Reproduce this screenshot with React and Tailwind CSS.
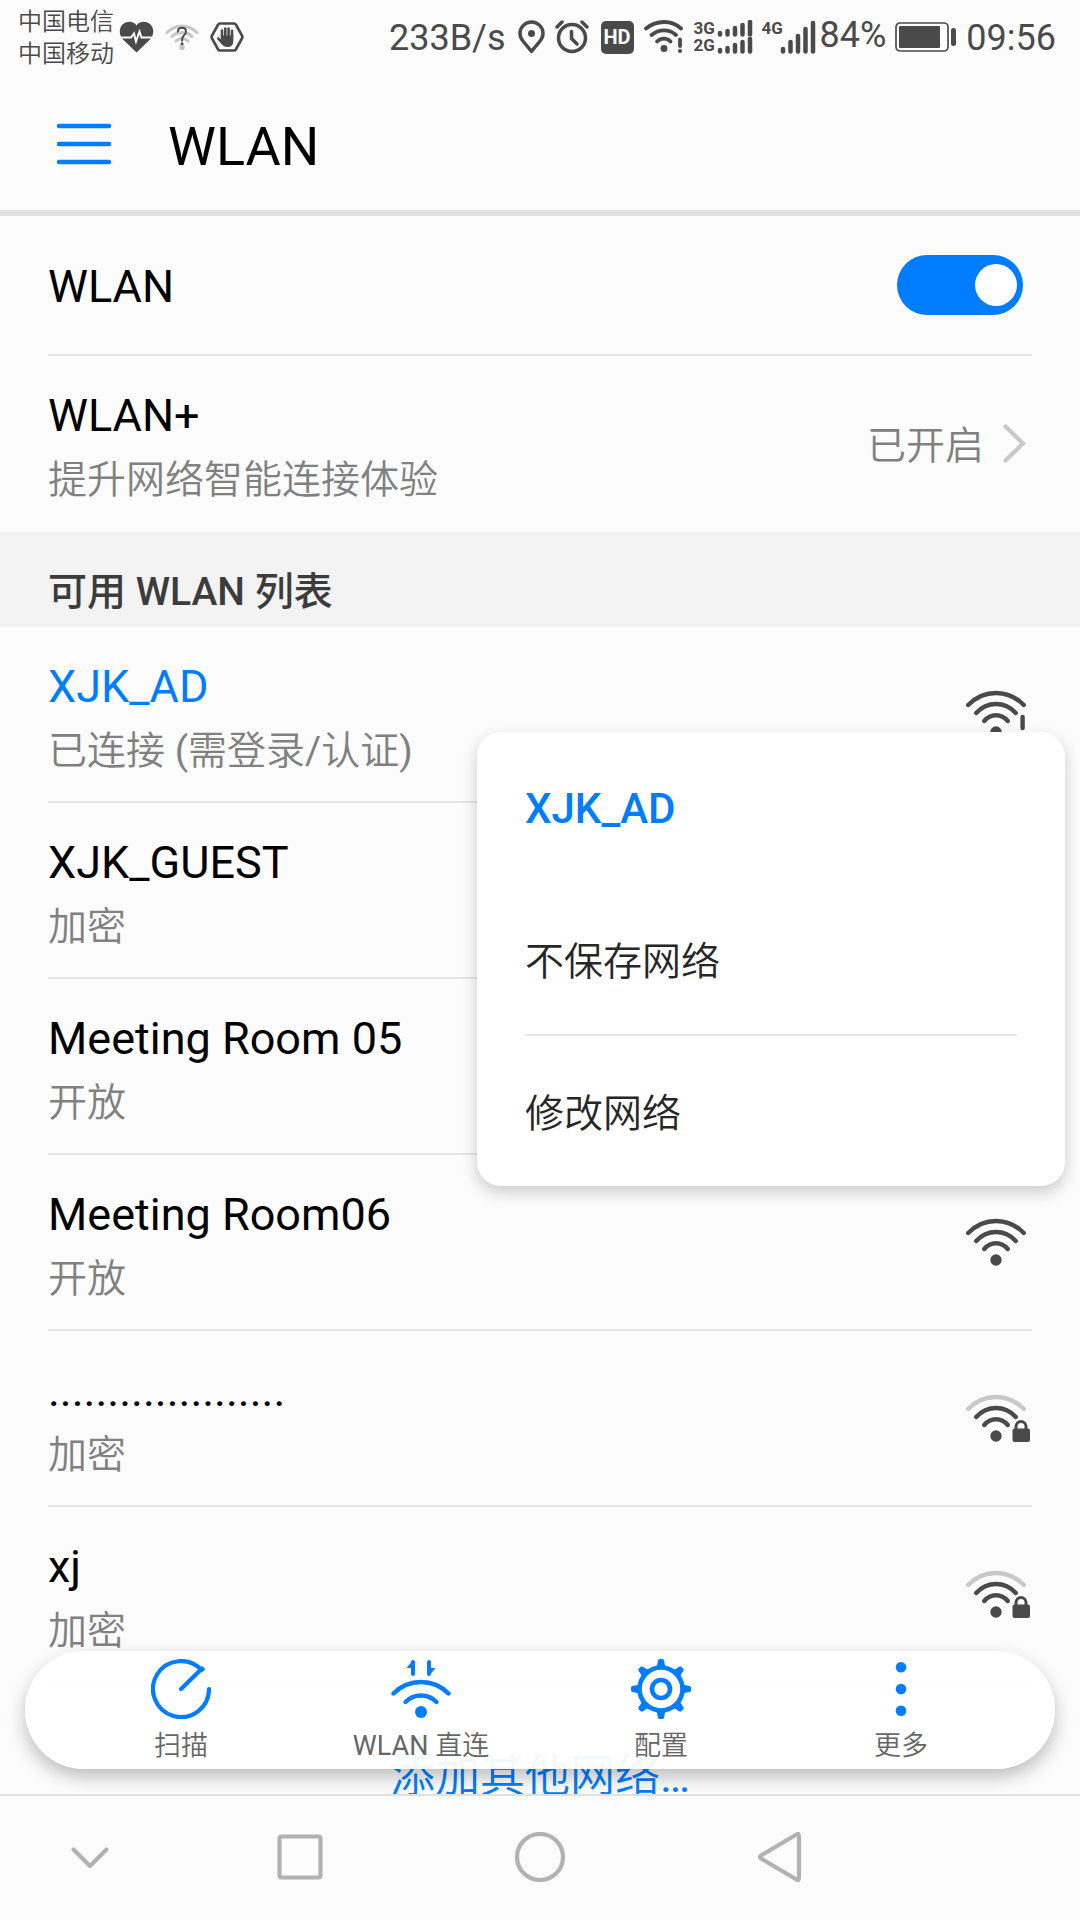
import React, { useState } from "react";

const INK = "#4a4a4a";
const BLUE = "#007dff";

const networks = [
  { name: "XJK_AD", state: "已连接 (需登录/认证)", active: true, kind: "alert" },
  { name: "XJK_GUEST", state: "加密", kind: "lock" },
  { name: "Meeting Room 05", state: "开放", kind: "open" },
  { name: "Meeting Room06", state: "开放", kind: "open" },
  { name: "....................", state: "加密", kind: "lock" },
  { name: "xj", state: "加密", kind: "lock" },
];

// Chinese runs are set a little lighter than the Latin letters and signs beside them.
function Mixed({ children }) {
  return children
    .split(/([\u4e00-\u9fff]+)/)
    .filter(Boolean)
    .map((part, i) =>
      /[\u4e00-\u9fff]/.test(part) ? (
        <span key={i} className="font-[350]">{part}</span>
      ) : (
        part
      )
    );
}

function WifiSignal({ kind }) {
  const outer = kind === "lock" ? "#c8c8c8" : INK;
  return (
    <svg width="66" height="48" viewBox="0 0 66 48" fill="none" strokeWidth="4.4" strokeLinecap="round" aria-hidden="true">
      <path d="M2.2 15 Q14 3 30 3 Q46 3 57.8 15" stroke={outer} />
      <path d="M10.2 23 Q18.5 14 30 14 Q41.5 14 49.8 23" stroke={INK} />
      <path d="M18.2 31 Q23 25.2 30 25.2 Q37 25.2 41.8 31" stroke={INK} />
      <circle cx="30" cy="42" r="5.7" fill={INK} />
      {kind === "lock" && (
        <g>
          <path d="M50 36 V32.5 a5 5 0 0 1 10 0 V36" stroke={INK} strokeWidth="3" />
          <rect x="46.5" y="34.5" width="17.5" height="13.5" rx="2" fill={INK} />
        </g>
      )}
      {kind === "alert" && (
        <g>
          <path d="M56.6 27 V38" stroke={INK} strokeWidth="4.4" />
          <circle cx="56.6" cy="45" r="2.4" fill={INK} />
        </g>
      )}
    </svg>
  );
}

function HeartIcon() {
  return (
    <svg width="35" height="32" viewBox="0 0 35 32" aria-hidden="true">
      <path d="M17.5 31.5 L4 18.5 C-1 13.5 0 5 5.5 2 C10 -.3 15 .6 17.5 4.5 C20 .6 25 -.3 29.5 2 C35 5 36 13.5 31 18.5 Z" fill={INK} />
      <path d="M0 16.5 H12 L15 12.5 L17 20.5 L20.5 10.5 L22.5 16.5 H35" fill="none" stroke="#fcfcfc" strokeWidth="2" />
    </svg>
  );
}

function WifiQueryIcon() {
  return (
    <svg width="34" height="28" viewBox="0 0 34 28" fill="none" strokeLinecap="round" aria-hidden="true">
      <g stroke="#c6c6c6" strokeWidth="3">
        <path d="M2 9.5 Q9 3 17 3 Q25 3 32 9.5" />
        <path d="M7 13.5 Q11 9.5 17 9.5 Q23 9.5 27 13.5" />
        <path d="M11 18 Q14 15.5 17 15.5 Q20 15.5 23 18" />
      </g>
      <circle cx="17" cy="24.5" r="2.8" fill="#c6c6c6" />
      <path d="M12.8 8.5 Q13 4.7 17 4.7 Q21 4.7 21 8.5 Q21 11 18.8 12.5 Q17 14 17 17.5" stroke={INK} strokeWidth="2" />
      <circle cx="17" cy="20.7" r="1.5" fill={INK} />
    </svg>
  );
}

function HandIcon() {
  return (
    <svg width="34" height="30" viewBox="0 0 34 30" fill="none" aria-hidden="true">
      <path d="M10 1.5 H24 Q25.2 1.5 26 2.8 L32 13.5 Q32.7 15 32 16.5 L26 27.2 Q25.2 28.5 24 28.5 H10 Q8.8 28.5 8 27.2 L2 16.5 Q1.3 15 2 13.5 L8 2.8 Q8.8 1.5 10 1.5Z" stroke={INK} strokeWidth="2.7" />
      <path d="M12 14.5 V8.5 M15.3 14 V6.6 M18.6 14 V6.6 M22 14.5 V8.8 M8.3 16.5 L12.5 21" stroke={INK} strokeWidth="2.6" strokeLinecap="round" />
      <path d="M10.7 13.5 H23.3 V19 Q23.3 25 17.5 25 Q13.5 25 11.3 21.5 Z" fill={INK} />
    </svg>
  );
}

function PinIcon() {
  return (
    <svg width="27" height="34" viewBox="0 0 27 34" fill="none" aria-hidden="true">
      <path d="M13.5 31.3 L5.3 21.5 Q2 17.5 2 13.5 A11.5 11.5 0 0 1 25 13.5 Q25 17.5 21.7 21.5 Z" stroke={INK} strokeWidth="3.5" strokeLinejoin="round" />
      <circle cx="13.5" cy="13.5" r="3.5" fill={INK} />
    </svg>
  );
}

function AlarmIcon() {
  return (
    <svg width="34" height="34" viewBox="0 0 34 34" fill="none" stroke={INK} strokeWidth="3.5" strokeLinecap="round" aria-hidden="true">
      <circle cx="17" cy="18" r="13.5" />
      <path d="M2 7 L7 2 M32 7 L27 2" />
      <path d="M16.5 11.5 V18.5 L22 24" />
    </svg>
  );
}

function StatusWifiIcon() {
  return (
    <svg width="40" height="34" viewBox="0 0 40 34" fill="none" stroke={INK} strokeWidth="3.8" strokeLinecap="round" aria-hidden="true">
      <path d="M2 8.5 Q10 2 20 2 Q30 2 37 8.5" />
      <path d="M7.5 15 Q13 10.3 20 10.3 Q27 10.3 32 15" />
      <path d="M13 21.5 Q16 18.6 20 18.6 Q24 18.6 26.5 21.5" />
      <circle cx="20" cy="28.5" r="3.4" fill={INK} stroke="none" />
      <path d="M36 19.5 V26" />
      <circle cx="36" cy="31" r="2" fill={INK} stroke="none" />
    </svg>
  );
}

function Bars({ width, height, step, sizes, stroke }) {
  return (
    <svg width={width} height={height} fill="none" stroke={INK} strokeWidth={stroke} strokeLinecap="round" aria-hidden="true">
      {sizes.map((s, i) => (
        <path key={i} d={`M${3 + i * step} ${height - 2.5} V${height - s + 2}`} />
      ))}
    </svg>
  );
}

function BatteryIcon() {
  return (
    <svg width="62" height="30" viewBox="0 0 62 30" fill="none" aria-hidden="true">
      <rect x="1" y="1" width="52" height="28" rx="4" stroke={INK} strokeWidth="1.7" />
      <rect x="4" y="4" width="41" height="22" rx="1" fill={INK} />
      <rect x="56" y="6" width="5" height="18" rx="2.5" fill={INK} />
    </svg>
  );
}

function StatusBar() {
  return (
    <header className="flex h-[74px] shrink-0 items-center pl-[18px] pr-6 text-[#4a4a4a]">
      <div className="pt-0.5 text-2xl font-[350] leading-8">
        <p>中国电信</p>
        <p>中国移动</p>
      </div>
      <div className="ml-[5px] flex items-center gap-[11px]">
        <HeartIcon />
        <WifiQueryIcon />
        <HandIcon />
      </div>
      <div className="ml-auto flex items-center text-[36px] leading-10">
        <span className="mr-3 pt-0.5">233B/s</span>
        <div className="flex items-center gap-[10px]">
          <PinIcon />
          <AlarmIcon />
          <span className="ml-0.5 flex h-[33px] w-[33px] items-center justify-center rounded-[5px] bg-[#4a4a4a] text-xl font-bold text-[#fcfcfc]">HD</span>
          <StatusWifiIcon />
        </div>
        <div className="ml-[10px] flex flex-col">
          <div className="flex items-end gap-[3px]">
            <span className="w-5 text-[17px] font-bold leading-[17px]">3G</span>
            <Bars width={36} height={17} step={7.5} sizes={[6, 8, 11, 14, 17]} stroke={4.5} />
          </div>
          <div className="flex items-end gap-[3px]">
            <span className="w-5 text-[17px] font-bold leading-[17px]">2G</span>
            <Bars width={36} height={17} step={7.5} sizes={[6, 8, 11, 14, 17]} stroke={4.5} />
          </div>
        </div>
        <div className="ml-[9px] flex items-start">
          <span className="w-[18px] text-[17px] font-bold leading-[17px]">4G</span>
          <Bars width={36} height={34} step={7.5} sizes={[7, 14, 20, 27, 33]} stroke={4.5} />
        </div>
        <span className="ml-1 mr-[9px] pb-1">84%</span>
        <BatteryIcon />
        <span className="ml-[9px] pt-0.5">09:56</span>
      </div>
    </header>
  );
}

function Row({ title, detail, active, children, divider = true }) {
  return (
    <div className={"flex h-44 items-center justify-between " + (divider ? "border-b-2 border-[#e5e5e5]" : "")}>
      <div className={"flex flex-col gap-3 " + (divider ? "pt-[10px]" : "pt-2")}>
        <span className={"text-[45px] leading-[52px] " + (active ? "text-[#007dff]" : "text-black")}>{title}</span>
        <span className="text-[39px] leading-[52px] text-[#808080]"><Mixed>{detail}</Mixed></span>
      </div>
      {children}
    </div>
  );
}

function ScanIcon() {
  return (
    <svg width="60" height="60" viewBox="0 0 60 60" fill="none" stroke={BLUE} strokeWidth="4.2" strokeLinecap="round" aria-hidden="true">
      <path d="M58 30 A28 28 0 1 1 50.5 11" />
      <path d="M30 30 L51 9.5" />
      <path d="M47 8.5 L54 10 L51 12Z" fill={BLUE} strokeWidth="1" />
    </svg>
  );
}

function DirectIcon() {
  return (
    <svg width="60" height="60" viewBox="0 0 60 60" fill="none" stroke={BLUE} strokeWidth="4.4" strokeLinecap="round" aria-hidden="true">
      <path d="M2.5 34.5 Q14 23 30 23 Q46 23 57.5 34.5" />
      <path d="M14.5 43 Q21 36.5 30 36.5 Q39 36.5 45.5 43" />
      <circle cx="30" cy="53" r="6" fill={BLUE} stroke="none" />
      <path d="M22 15 V3 M38 3 V15" strokeWidth="4" />
      <path d="M22 1 L15.5 9 H22Z M38 17 L44.5 9 H38Z" fill={BLUE} stroke="none" />
    </svg>
  );
}

function GearIcon() {
  return (
    <svg width="60" height="60" viewBox="0 0 60 60" fill="none" stroke={BLUE} aria-hidden="true">
      <circle cx="30" cy="30" r="21.5" strokeWidth="4.6" />
      <circle cx="30" cy="30" r="9" strokeWidth="4.6" />
      {[0, 45, 90, 135, 180, 225, 270, 315].map((a) => (
        <path key={a} transform={`rotate(${a} 30 30)`} d="M23 9 L26 6.5 L26.9 1.5 Q27.2 0 28.5 0 H31.5 Q32.8 0 33.1 1.5 L34 6.5 L37 9Z" fill={BLUE} stroke="none" />
      ))}
    </svg>
  );
}

function MoreIcon() {
  return (
    <svg width="60" height="60" viewBox="0 0 60 60" fill={BLUE} aria-hidden="true">
      <circle cx="30" cy="8.3" r="5.3" />
      <circle cx="30" cy="30" r="5.3" />
      <circle cx="30" cy="51.7" r="5.3" />
    </svg>
  );
}

const tools = [
  { label: "扫描", Icon: ScanIcon },
  { label: "WLAN 直连", Icon: DirectIcon },
  { label: "配置", Icon: GearIcon },
  { label: "更多", Icon: MoreIcon },
];

const navItems = [
  { label: "收起", shape: <path d="M8.5 17.5 L25 34 L41.5 17.5" /> },
  { label: "最近任务", shape: <rect x="4.5" y="4.5" width="41" height="41" rx="2" /> },
  { label: "主屏幕", shape: <circle cx="25" cy="25" r="23" /> },
  { label: "返回", shape: <path d="M44 4 V46 Q44 49 41.5 47.5 L6 26.5 Q4 25 6 23.5 L41.5 2.5 Q44 1 44 4Z" /> },
];

export default function App() {
  const [enabled, setEnabled] = useState(true);

  return (
    <div className="flex h-screen flex-col overflow-hidden bg-[#fcfcfc] font-[Roboto,'Noto_Sans_CJK_SC',sans-serif] text-black">
      <StatusBar />

      <div className="flex h-[142px] shrink-0 items-center border-b-[6px] border-[#e0e0e0] pl-14 pt-1">
        <button type="button" aria-label="菜单">
          <svg width="56" height="42" viewBox="0 0 56 42" stroke={BLUE} strokeWidth="4.4" strokeLinecap="round" aria-hidden="true">
            <path d="M3 3 H53 M3 21 H53 M3 39 H53" />
          </svg>
        </button>
        <h1 className="ml-14 pt-1.5 text-[54px] leading-[64px]">WLAN</h1>
      </div>

      <main className="relative min-h-0 flex-1 overflow-hidden">
        <section className="px-12">
          <label className="flex h-[140px] items-center justify-between border-b-2 border-[#e5e5e5] pr-[9px]">
            <span className="pt-[3px] text-[45px] leading-[52px]">WLAN</span>
            <input
              type="checkbox"
              role="switch"
              checked={enabled}
              onChange={(e) => setEnabled(e.target.checked)}
              className="flex h-[60px] w-[126px] appearance-none items-center rounded-full bg-[#c8c8c8] px-1.5 before:h-[42px] before:w-[42px] before:rounded-full before:bg-white checked:justify-end checked:bg-[#007dff]"
            />
          </label>
          <Row title="WLAN+" detail="提升网络智能连接体验" divider={false}>
            <a href="#wlan-plus" className="flex items-center gap-[18px] pr-1.5 text-[39px] font-[350] leading-[52px] text-[#808080]">
              <span className="pt-[3px]">已开启</span>
              <svg width="24" height="40" viewBox="0 0 24 40" fill="none" stroke="#c8c8c8" strokeWidth="4.2" strokeLinecap="round" aria-hidden="true">
                <path d="M3.500 2.500 L21 19.500 L3.500 36.500" />
              </svg>
            </a>
          </Row>
        </section>

        <h2 className="flex h-[95px] items-end bg-[#f3f3f3] px-12 pb-[9px] text-[39px] font-medium leading-[52px] text-[#3c3c3c]">可用 WLAN 列表</h2>

        <div className="relative">
          <ul className="px-12">
            {networks.map((n) => (
              <li key={n.name}>
                <Row title={n.name} detail={n.state} active={n.active}>
                  <WifiSignal kind={n.kind} />
                </Row>
              </li>
            ))}
          </ul>

          <div role="menu" aria-label="XJK_AD" className="absolute right-[15px] top-[105px] w-[588px] rounded-3xl bg-white px-12 shadow-[0_6px_16px_rgba(0,0,0,0.2)]">
            <p className="flex h-[152px] items-center text-[42px] font-medium text-[#007dff]">XJK_AD</p>
            <button type="button" role="menuitem" className="flex h-[152px] w-full items-center border-b-2 border-[#e5e5e5] pt-1.5 text-[39px] font-[350] text-[#262626]">不保存网络</button>
            <button type="button" role="menuitem" className="flex h-[150px] w-full items-center pt-1.5 text-[39px] font-[350] text-[#262626]">修改网络</button>
          </div>
        </div>

        <button type="button" className="block w-full pt-16 text-center text-[45px] leading-[60px] text-[#007dff]"><Mixed>添加其他网络…</Mixed></button>

        <div role="toolbar" className="absolute inset-x-[25px] bottom-[25px] grid h-[118px] grid-cols-4 rounded-full bg-white/95 pl-9 pr-[34px] shadow-[0_8px_18px_rgba(0,0,0,0.25)]">
          {tools.map(({ label, Icon }) => (
            <button key={label} type="button" className="flex flex-col items-center gap-[9px] pt-2 text-[27px] leading-9 text-[#666666]">
              <Icon />
              <span><Mixed>{label}</Mixed></span>
            </button>
          ))}
        </div>
      </main>

      <nav className="grid h-[126px] shrink-0 grid-cols-[3fr_4fr_4fr_4fr_3fr] items-center border-t-2 border-[#e0e0e0] pb-[3px]">
        {navItems.map(({ label, shape }) => (
          <button key={label} type="button" aria-label={label} className="flex justify-center">
            <svg width="50" height="50" viewBox="0 0 50 50" fill="none" stroke="#b2b2b2" strokeWidth="4.2" strokeLinecap="round" strokeLinejoin="round" aria-hidden="true">
              {shape}
            </svg>
          </button>
        ))}
      </nav>
    </div>
  );
}
